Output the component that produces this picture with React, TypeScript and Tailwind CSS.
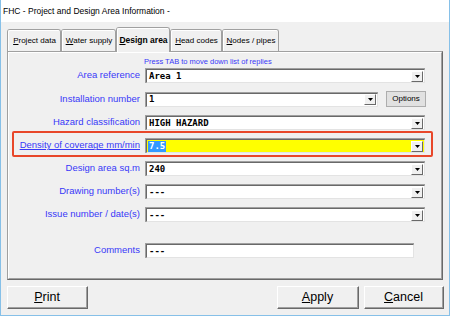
import React from "react";

const Arrow = () => (
  <div className="w-[12px] h-[11px] shrink-0 bg-[#f0f0f0] border-t border-l border-white border-b border-r border-b-[#696969] border-r-[#696969] flex items-center justify-center">
    <svg width="5" height="3" viewBox="0 0 5 3">
      <path d="M0 0h5L2.5 3z" fill="#000" />
    </svg>
  </div>
);

type FieldProps = {
  value: string;
  width: string;
  dropdown?: boolean;
  yellow?: boolean;
  selected?: boolean;
};

const Field = ({ value, width, dropdown = true, yellow, selected }: FieldProps) => (
  <div className={`${width} h-[15px] shrink-0 border-t border-l border-[#a0a0a0] border-b-white border-r-white`}>
    <div className={`h-full border-t border-l border-[#696969] border-b border-r border-b-[#e3e3e3] border-r-[#e3e3e3] flex items-center justify-between pl-[1px] pr-[1px] ${yellow ? "bg-[#ffff00]" : "bg-white"}`}>
      <span
        className={`font-['DejaVu_Sans_Mono'] font-bold text-[9px] leading-[11px] text-black px-[1px] ${selected ? "bg-[#3399ff] text-white" : ""}`}
      >
        {value}
      </span>
      {dropdown && <Arrow />}
    </div>
  </div>
);

const Label = ({ children, underline }: { children: React.ReactNode; underline?: boolean }) => (
  <div className="w-[131px] shrink-0 text-right pr-[5px] text-[9.5px] text-[#3838f8] whitespace-nowrap">
    <span className={underline ? "underline" : ""}>{children}</span>
  </div>
);

const Tab = ({ u, rest, active, width }: { u: string; rest: string; active?: boolean; width: string }) => (
  <div
    className={`${width} rounded-t-[3px] border-t border-l border-r border-[#a0a0a0] ${
      active ? "h-[25px] -mb-[1px] z-10 font-bold text-[8.5px]" : "h-[22px] text-[8px]"
    } bg-[#f0f0f0] text-black`}
  >
    <div className={`h-full flex items-center justify-center rounded-t-[2px] border-t border-l border-white ${active ? "pb-[1px]" : ""}`}>
      <span className="underline">{u}</span>
      {rest}
    </div>
  </div>
);

const Btn = ({ u, rest, width }: { u: string; rest: string; width: string }) => (
  <div className={`${width} h-[23px] border-t border-l border-white border-b border-r border-b-[#696969] border-r-[#696969] bg-[#f0f0f0]`}>
    <div className="h-full border-b border-r border-[#a0a0a0] border-t-0 border-l-0 flex items-center justify-center text-[12.5px] text-black">
      <span className="underline">{u}</span>
      {rest}
    </div>
  </div>
);

export default function App() {
  return (
    <div className="w-[450px] h-[316px] bg-[#f0f0f0] border-l border-r border-b border-[#86c0e8] flex flex-col font-['Liberation_Sans'] overflow-hidden">
      <div className="h-[22px] bg-white flex items-center pl-[2px] text-[8.5px] text-black">
        FHC - Project and Design Area Information -
      </div>

      <div className="pl-[6px] pt-[5px] flex flex-col">
        <div className="flex items-end h-[24px] relative z-10">
          <Tab u="P" rest="roject data" width="w-[54px]" />
          <Tab u="W" rest="ater supply" width="w-[55px]" />
          <Tab u="D" rest="esign area" active width="w-[54px]" />
          <Tab u="H" rest="ead codes" width="w-[52px]" />
          <Tab u="N" rest="odes / pipes" width="w-[57px]" />
        </div>

        <div className="w-[436px] h-[229px] border-t border-l border-[#a0a0a0] border-b border-r border-b-[#696969] border-r-[#696969]">
          <div className="h-full border-t border-l border-white border-b border-r border-b-[#a0a0a0] border-r-[#a0a0a0] flex flex-col pl-[5px]">
            <div className="pl-[130px] pt-[4px] h-[15px] text-[7.5px] leading-[10px] text-[#3838f8] whitespace-nowrap">
              Press TAB to move down list of replies
            </div>

            <div className="flex flex-col gap-[8px]">
              <div className="flex items-center">
                <Label>Area reference</Label>
                <Field value="Area 1" width="w-[280px]" />
              </div>
              <div className="flex items-center">
                <Label>Installation number</Label>
                <Field value="1" width="w-[233px]" />
                <div className="ml-[8px] w-[40px] h-[16px] border border-[#adadad] bg-[#e1e1e1] flex items-center justify-center text-[8px] text-black">
                  Options
                </div>
              </div>
              <div className="flex items-center">
                <Label>Hazard classification</Label>
                <Field value="HIGH HAZARD" width="w-[280px]" />
              </div>
              <div className="flex items-center relative">
                <div className="absolute left-[-2px] top-[-7px] w-[421px] h-[26px] border-2 border-[#e8472a] rounded-[2px]" />
                <Label underline>Density of coverage mm/min</Label>
                <Field value="7.5" width="w-[280px]" yellow selected />
              </div>
              <div className="flex items-center">
                <Label>Design area sq.m</Label>
                <Field value="240" width="w-[280px]" />
              </div>
              <div className="flex items-center">
                <Label>Drawing number(s)</Label>
                <Field value="---" width="w-[280px]" />
              </div>
              <div className="flex items-center">
                <Label>Issue number / date(s)</Label>
                <Field value="---" width="w-[280px]" />
              </div>
              <div className="flex items-center mt-[13px]">
                <Label>Comments</Label>
                <Field value="---" width="w-[269px]" dropdown={false} />
              </div>
            </div>
          </div>
        </div>

        <div className="flex mt-[6px] w-[437px]">
          <Btn u="P" rest="rint" width="w-[81px]" />
          <div className="flex-1" />
          <Btn u="A" rest="pply" width="w-[82px]" />
          <div className="w-[5px]" />
          <Btn u="C" rest="ancel" width="w-[80px]" />
        </div>
      </div>
    </div>
  );
}
